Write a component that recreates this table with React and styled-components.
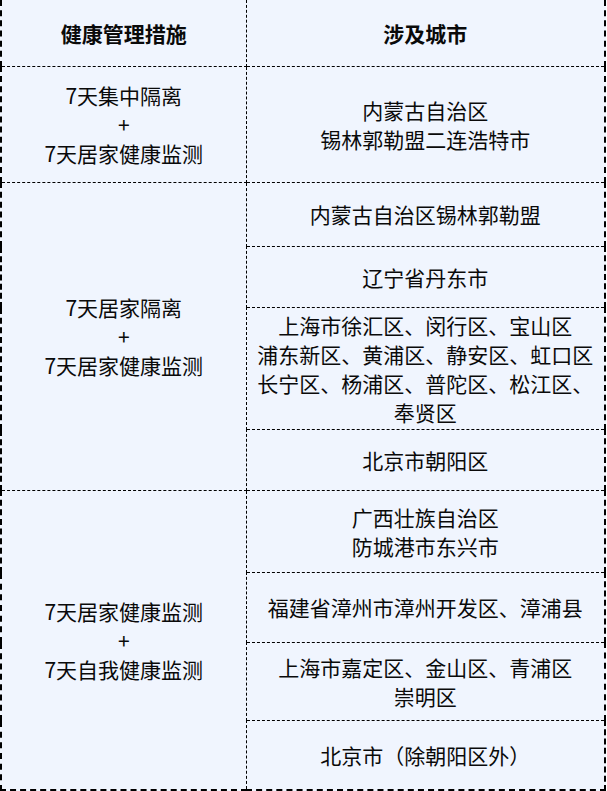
import styled, { createGlobalStyle } from "styled-components";

const GlobalStyle = createGlobalStyle`
  html, body {
    margin: 0;
    padding: 0;
    background: #ffffff;
  }
  body {
    font-family: "Noto Sans CJK SC", "Noto Sans", sans-serif;
  }
`;

const Table = styled.table`
  width: 606px;
  border-collapse: collapse;
  table-layout: fixed;
  background: #f0f5fe;
  color: #0a0a0a;
  font-size: 21px;
  line-height: 29px;
  border-left: 2px dashed #000;
  border-right: 2px dashed #000;
  border-bottom: 2px dashed #000;
`;

const HeadCell = styled.th`
  height: 66px;
  padding: 0;
  font-weight: bold;
  text-align: center;
  vertical-align: middle;
  border-right: 1px dashed #000;
  border-bottom: 1px dashed #000;
`;

const Cell = styled.td`
  height: ${(p) => p.$h}px;
  padding: 0 8px;
  text-align: center;
  vertical-align: middle;
  border-right: 1px dashed #000;
  border-bottom: 1px dashed #000;
  white-space: nowrap;
`;

const groups = [
  {
    measure: ["7天集中隔离", "+", "7天居家健康监测"],
    cities: [{ h: 115, lines: ["内蒙古自治区", "锡林郭勒盟二连浩特市"] }],
  },
  {
    measure: ["7天居家隔离", "+", "7天居家健康监测"],
    cities: [
      { h: 63, lines: ["内蒙古自治区锡林郭勒盟"] },
      { h: 60, lines: ["辽宁省丹东市"] },
      {
        h: 121,
        lines: [
          "上海市徐汇区、闵行区、宝山区",
          "浦东新区、黄浦区、静安区、虹口区",
          "长宁区、杨浦区、普陀区、松江区、",
          "奉贤区",
        ],
      },
      { h: 60, lines: ["北京市朝阳区"] },
    ],
  },
  {
    measure: ["7天居家健康监测", "+", "7天自我健康监测"],
    cities: [
      { h: 81, lines: ["广西壮族自治区", "防城港市东兴市"] },
      { h: 69, lines: ["福建省漳州市漳州开发区、漳浦县"] },
      { h: 77, lines: ["上海市嘉定区、金山区、青浦区", "崇明区"] },
      { h: 68, lines: ["北京市（除朝阳区外）"] },
    ],
  },
];

function Lines({ lines }) {
  return lines.map((l, i) => (
    <span key={i}>
      {i > 0 && <br />}
      {l}
    </span>
  ));
}

export default function App() {
  return (
    <>
      <GlobalStyle />
      <Table>
        <colgroup>
          <col style={{ width: 245 }} />
          <col />
        </colgroup>
        <thead>
          <tr>
            <HeadCell>健康管理措施</HeadCell>
            <HeadCell>涉及城市</HeadCell>
          </tr>
        </thead>
        <tbody>
          {groups.map((g, gi) =>
            g.cities.map((c, ci) => (
              <tr key={`${gi}-${ci}`}>
                {ci === 0 && (
                  <Cell rowSpan={g.cities.length}>
                    <Lines lines={g.measure} />
                  </Cell>
                )}
                <Cell $h={c.h}>
                  <Lines lines={c.lines} />
                </Cell>
              </tr>
            ))
          )}
        </tbody>
      </Table>
    </>
  );
}
